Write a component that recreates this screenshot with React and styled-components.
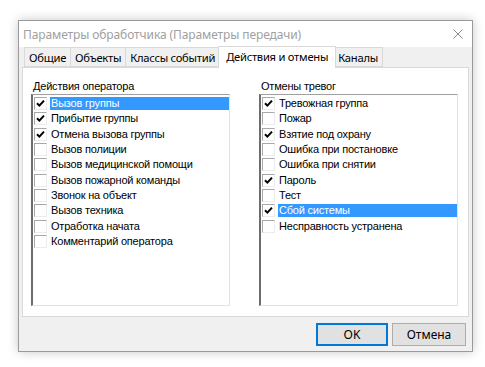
import React from 'react'
import styled, { createGlobalStyle } from 'styled-components'

const GlobalStyle = createGlobalStyle`
  html, body {
    margin: 0;
    padding: 0;
    background: #ffffff;
  }
  body {
    font-family: "Noto Sans", "Liberation Sans", sans-serif;
    font-size: 12px;
    color: #000;
  }
`

const Page = styled.div`
  width: 485px;
  height: 367px;
  padding: 20px 0 0 18px;
  box-sizing: border-box;
`

const Window = styled.div`
  width: 455px;
  height: 332px;
  box-sizing: border-box;
  border: 1px solid #9a9a9a;
  background: #f0f0f0;
  box-shadow: 0 0 10px rgba(0, 0, 0, 0.22);
  display: flex;
  flex-direction: column;
`

const TitleBar = styled.div`
  height: 26px;
  background: #ffffff;
  display: flex;
  align-items: center;
  justify-content: space-between;
  padding: 0 9px 0 4px;
  flex-shrink: 0;
`

const TitleText = styled.span`
  color: #a0a0a0;
  font-size: 12px;
  letter-spacing: -0.1px;
`

const Body = styled.div`
  flex: 1;
  display: flex;
  flex-direction: column;
  padding: 0 3px 0 3px;
`

const TabStrip = styled.div`
  display: flex;
  align-items: flex-end;
  height: 20px;
  padding-left: 2px;
`

const Tab = styled.div`
  height: ${(p) => (p.$active ? '22px' : '20px')};
  margin: ${(p) => (p.$active ? '0 -2px -1px -2px' : '0')};
  padding: 0 ${(p) => (p.$active ? '7px' : '4px')} ${(p) => (p.$active ? '2px' : '0')};
  display: flex;
  align-items: center;
  box-sizing: border-box;
  border: 1px solid #d9d9d9;
  border-bottom: ${(p) => (p.$active ? 'none' : '1px solid #d9d9d9')};
  border-left: ${(p) => (p.$first || p.$active ? '1px solid #d9d9d9' : 'none')};
  background: ${(p) => (p.$active ? '#ffffff' : '#f0f0f0')};
  position: relative;
  z-index: ${(p) => (p.$active ? 2 : 1)};
  white-space: nowrap;
  font-size: 11.2px;
  letter-spacing: -0.25px;
`

const Panel = styled.div`
  height: 250px;
  box-sizing: border-box;
  background: #ffffff;
  border: 1px solid #d9d9d9;
  display: grid;
  grid-template-columns: 199px 199px;
  column-gap: 29px;
  padding: 10px 0 0 8px;
  position: relative;
  z-index: 1;
`

const Column = styled.div`
  display: flex;
  flex-direction: column;
`

const GroupLabel = styled.div`
  font-family: "Liberation Sans", Arial, sans-serif;
  font-size: 11px;
  letter-spacing: -0.2px;
  height: 16px;
  line-height: 16px;
  padding-left: 2px;
`

const ListBox = styled.div`
  height: 212px;
  box-sizing: border-box;
  border-top: 1px solid #a0a0a0;
  border-left: 2px solid #6d6d6d;
  border-right: 1px solid #e3e3e3;
  border-bottom: 1px solid #e3e3e3;
  background: #ffffff;
  padding-top: 1px;
`

const Row = styled.div`
  display: flex;
  align-items: center;
  height: 15.3px;
  font-family: "Liberation Sans", Arial, sans-serif;
  font-size: 11px;
  letter-spacing: -0.2px;
  padding-left: 1px;
`

const Box = styled.span`
  width: 13px;
  height: 13px;
  box-sizing: border-box;
  border-top: 1px solid #a8a8a8;
  border-left: 1px solid #a8a8a8;
  border-right: 1px solid #ececec;
  border-bottom: 1px solid #ececec;
  background: #ffffff;
  flex-shrink: 0;
  display: flex;
  align-items: center;
  justify-content: center;
`

const Label = styled.span`
  flex: 1;
  margin-left: 3px;
  padding-left: 1px;
  height: 13px;
  line-height: 13px;
  background: ${(p) => (p.$selected ? '#3399ff' : 'transparent')};
  color: ${(p) => (p.$selected ? '#ffffff' : '#000000')};
  white-space: nowrap;
`

const Footer = styled.div`
  flex: 1;
  display: flex;
  justify-content: flex-end;
  align-items: center;
  gap: 4px;
  padding-right: 3px;
`

const Button = styled.div`
  width: ${(p) => (p.$default ? '72px' : '74px')};
  height: 23px;
  box-sizing: border-box;
  border: ${(p) => (p.$default ? '2px solid #0078d7' : '1px solid #adadad')};
  background: #e1e1e1;
  display: flex;
  align-items: center;
  justify-content: center;
  font-size: 12px;
`

const Check = () => (
  <svg width="9" height="9" viewBox="0 0 9 9">
    <path d="M1 4.2 L3.4 6.6 L8 1.6" fill="none" stroke="#000" strokeWidth="2" />
  </svg>
)

const CloseIcon = () => (
  <svg width="10" height="10" viewBox="0 0 10 10">
    <path d="M0.5 0.5 L9.5 9.5 M9.5 0.5 L0.5 9.5" stroke="#8a8a8a" strokeWidth="1" />
  </svg>
)

const tabs = ['Общие', 'Объекты', 'Классы событий', 'Действия и отмены', 'Каналы']

const operatorActions = [
  { text: 'Вызов группы', checked: true, selected: true },
  { text: 'Прибытие группы', checked: true },
  { text: 'Отмена вызова группы', checked: true },
  { text: 'Вызов полиции' },
  { text: 'Вызов медицинской помощи' },
  { text: 'Вызов пожарной команды' },
  { text: 'Звонок на объект' },
  { text: 'Вызов техника' },
  { text: 'Отработка начата' },
  { text: 'Комментарий оператора' },
]

const alarmCancels = [
  { text: 'Тревожная группа', checked: true },
  { text: 'Пожар' },
  { text: 'Взятие под охрану', checked: true },
  { text: 'Ошибка при постановке' },
  { text: 'Ошибка при снятии' },
  { text: 'Пароль', checked: true },
  { text: 'Тест' },
  { text: 'Сбой системы', checked: true, selected: true },
  { text: 'Несправность устранена' },
]

const CheckList = ({ title, items }) => (
  <Column>
    <GroupLabel>{title}</GroupLabel>
    <ListBox>
      {items.map((item) => (
        <Row key={item.text}>
          <Box>{item.checked && <Check />}</Box>
          <Label $selected={item.selected}>{item.text}</Label>
        </Row>
      ))}
    </ListBox>
  </Column>
)

const App = () => {
  return (
    <Page>
      <GlobalStyle />
      <Window>
        <TitleBar>
          <TitleText>Параметры обработчика (Параметры передачи)</TitleText>
          <CloseIcon />
        </TitleBar>
        <Body>
          <TabStrip>
            {tabs.map((t, i) => (
              <Tab key={t} $first={i === 0} $active={i === 3}>
                {t}
              </Tab>
            ))}
          </TabStrip>
          <Panel>
            <CheckList title="Действия оператора" items={operatorActions} />
            <CheckList title="Отмены тревог" items={alarmCancels} />
          </Panel>
          <Footer>
            <Button $default>OK</Button>
            <Button>Отмена</Button>
          </Footer>
        </Body>
      </Window>
    </Page>
  )
}

export default App
